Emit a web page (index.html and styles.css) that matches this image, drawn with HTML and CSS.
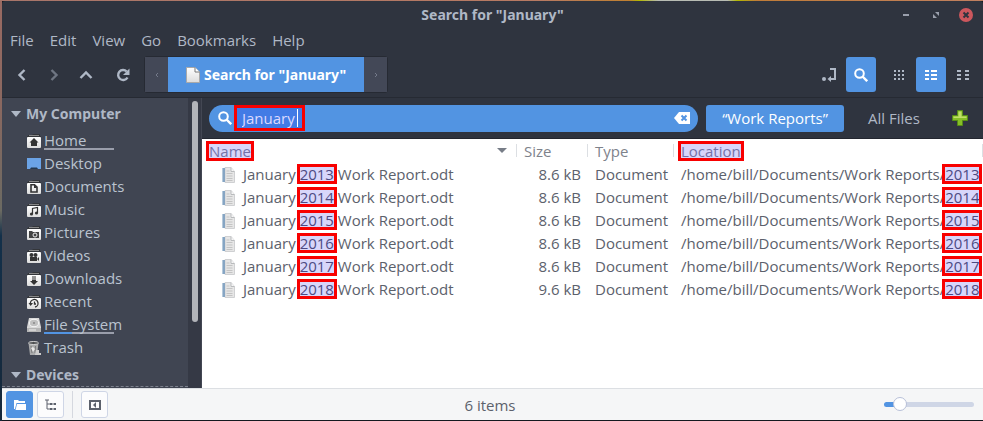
FILE: index.html
```html
<!DOCTYPE html>
<html lang="en">
<head>
<meta charset="utf-8">
<title>Search for "January"</title>
<link rel="stylesheet" href="styles.css">
</head>
<body>
<svg class="defs" aria-hidden="true">
  <linearGradient id="paper" x2="0" y2="1"><stop offset="0" stop-color="#fff"/><stop offset="1" stop-color="#dcdcdc"/></linearGradient>
  <symbol id="folder" viewBox="0 0 14 14">
    <path d="M0 3V2h1V1h4l1-1h7v2h1v1z" fill="#34363a"/><path d="M2 1.5h10" stroke="#888" stroke-width="1"/>
    <rect y="3" width="14" height="11" rx="1" fill="url(#paper)"/>
  </symbol>
  <symbol id="doc" viewBox="0 0 14 16">
    <path d="M3 .5h6l3.500 4v11H3z" fill="#e6e6e6" stroke="#cfd0d2"/>
    <path d="M9 .5v4h3.500" fill="#f6f6f6" stroke="#b9bbbd"/>
    <path d="M4.500 4h3M4.500 6.500h6M4.500 9h6M4.500 11.500h6M4.500 13.500h6" stroke="#c4c4c4"/>
    <path d="M0 1h3v14H0z" fill="#86a5c3"/><path d="M0 1h1v14H0z" fill="#b5c9db"/>
  </symbol>
  <symbol id="lens" viewBox="0 0 14 14">
    <circle cx="5.500" cy="5.500" r="4.300" fill="none" stroke="#fff" stroke-width="2"/><path d="M8.500 8.500l4.700 4.700" stroke="#fff" stroke-width="2.400"/>
  </symbol>
</svg>
<div class="window">
  <header class="titlebar">
    <h1>Search for "January"</h1>
    <div class="controls">
      <button aria-label="Minimize"><svg width="14" height="14"><path d="M4 7h6" stroke="#9a9fac" stroke-width="2"/></svg></button>
      <button aria-label="Restore"><svg width="14" height="14"><path d="M6 4h4v4zM4 6v4h4z" fill="#9a9fac"/></svg></button>
      <button aria-label="Close"><svg width="14" height="14"><circle cx="7" cy="7" r="7" fill="#cc575d"/><path d="M4.500 4.500l5 5m0-5l-5 5" stroke="#2f343f" stroke-width="2"/></svg></button>
    </div>
  </header>
  <nav class="menubar">
    <button>File</button><button>Edit</button><button>View</button><button>Go</button><button>Bookmarks</button><button>Help</button>
  </nav>
  <div class="toolbar">
    <div class="nav">
      <button aria-label="Back"><svg width="14" height="14"><path d="M9.500 2l-5 5 5 5" class="stroke"/></svg></button>
      <button aria-label="Forward" disabled><svg width="14" height="14"><path d="M4.500 2l5 5-5 5" class="stroke"/></svg></button>
      <button aria-label="Up"><svg width="14" height="14"><path d="M1.500 10L7 4.500l5.500 5.500" class="stroke"/></svg></button>
    </div>
    <button class="reload" aria-label="Reload"><svg width="14" height="14"><path d="M11.500 9.500a5 5 0 1 1-.8-6" class="stroke"/><path d="M13.500.5V7H7z" fill="#afb8c6"/></svg></button>
    <div class="path">
      <button aria-label="Scroll path left"><svg width="4" height="6"><path d="M3 1L1 3l2 2" fill="none" stroke="#747a8a"/></svg></button>
      <button class="current"><svg width="14" height="16"><path d="M.5.5H9l4.500 4.500v10.500H.5z" fill="url(#paper)" stroke="#a9a9a9"/><path d="M9 .5V5h4.500" fill="#fff" stroke="#777"/></svg>Search for "January"</button>
      <button aria-label="Scroll path right"><svg width="4" height="6"><path d="M1 1l2 2-2 2" fill="none" stroke="#747a8a"/></svg></button>
    </div>
    <div class="views">
      <button aria-label="Toggle location entry"><svg width="14" height="14"><path d="M8 1h5v10H8" fill="none" stroke="#afb8c6" stroke-width="2"/><path d="M9 8v6l-3.500-3z" fill="#afb8c6"/><circle cx="2" cy="11" r="2" fill="#afb8c6"/></svg></button>
      <button class="on" aria-label="Search"><svg width="14" height="14"><use href="#lens"/></svg></button>
    </div>
    <div class="views">
      <button aria-label="Icon view"><svg width="12" height="12"><path d="M1 2h10M1 6h10M1 10h10" stroke="#afb8c6" stroke-width="2" stroke-dasharray="2 2"/></svg></button>
      <button class="on" aria-label="List view"><svg width="12" height="12"><path d="M0 2h4m2 0h6M0 6h4m2 0h6M0 10h4m2 0h6" stroke="#fff" stroke-width="2"/></svg></button>
      <button aria-label="Compact view"><svg width="12" height="12"><path d="M0 2h4m4 0h4M0 6h4m4 0h4M0 10h4m4 0h4" stroke="#afb8c6" stroke-width="2"/></svg></button>
    </div>
  </div>
  <div class="content">
    <aside class="sidebar">
      <div class="places">
        <h2>My Computer</h2>
        <ul>
          <li><svg width="14" height="14"><use href="#folder"/><path d="M7 4L2.500 8.500H4V12h6V8.500h1.500z" fill="#333"/></svg><a href="#" class="usage">Home</a></li>
          <li><svg width="14" height="14"><path d="M0 1h14v11H0z" fill="#6ba3e6"/><path d="M4 10.500h6l1 1.500H3z" fill="#24384f"/></svg><a href="#">Desktop</a></li>
          <li><svg width="14" height="14"><use href="#folder"/><path d="M4 4.800h3.500L10 7v5H4z" fill="none" stroke="#333" stroke-width="1.600"/><path d="M7 4v4h3" fill="#333"/></svg><a href="#">Documents</a></li>
          <li><svg width="14" height="14"><use href="#folder"/><path d="M5.500 11V5.500l5-1V10" fill="none" stroke="#333" stroke-width="1.200"/><circle cx="4.500" cy="11" r="1.600" fill="#333"/><circle cx="9.500" cy="10" r="1.600" fill="#333"/></svg><a href="#">Music</a></li>
          <li><svg width="14" height="14"><use href="#folder"/><path d="M2 5h3l1 1h6v6H2z" fill="#444"/><circle cx="8" cy="9" r="2" fill="#444" stroke="#eee"/></svg><a href="#">Pictures</a></li>
          <li><svg width="14" height="14"><use href="#folder"/><circle cx="4.500" cy="6" r="2" fill="#333"/><circle cx="8.500" cy="6" r="2" fill="#333"/><path d="M3 8h7v4H3zm7 2l2-2v4z" fill="#333"/></svg><a href="#">Videos</a></li>
          <li><svg width="14" height="14"><use href="#folder"/><path d="M5 5h4M5 7h4" stroke="#333"/><path d="M5 8h4v1h2l-4 4-4-4h2z" fill="#333"/></svg><a href="#">Downloads</a></li>
          <li><svg width="14" height="14"><use href="#folder"/><path d="M3.500 9A3.800 3.800 0 1 1 8 12M7.500 6.500V9H9" fill="none" stroke="#333" stroke-width="1.300"/><path d="M1.500 8H6l-2.300 3z" fill="#333"/></svg><a href="#">Recent</a></li>
          <li><svg width="14" height="14"><path d="M2 0h10l2 9v5H0V9z" fill="#d8d8d8"/><ellipse cx="7" cy="5" rx="4.500" ry="3.700" fill="#c1c1c1" stroke="#f5f5f5"/><path d="M0 10h14v4H0z" fill="#b5b5b5"/><path d="M2 12h7" stroke="#eee"/><circle cx="7" cy="5" r="1" fill="#888"/></svg><a href="#" class="usage part">File System</a></li>
          <li><svg width="14" height="14"><path d="M1.500 2L3 14h7l1.500-12z" fill="#a9aaab"/><ellipse cx="6.500" cy="2" rx="5" ry="1.500" fill="#4c4e50" stroke="#d8d8d8"/><path d="M4 5l1 7M8.500 5L8 12" stroke="#777"/><path d="M4 7l2-1 2 2-2 3z" fill="#e8e8e8"/><path d="M9 9h3v3h2v2H8z" fill="#ccc"/></svg><a href="#">Trash</a></li>
        </ul>
        <h2>Devices</h2>
      </div>
      <div class="gutter"><div class="scroll"></div></div>
    </aside>
    <main>
      <form class="search">
        <div class="entry">
          <svg width="14" height="14"><use href="#lens"/></svg>
          <label class="query"><input type="text" value="January" aria-label="Search for files"><span class="caret"></span></label>
          <button type="button" aria-label="Clear"><svg width="16" height="12"><path d="M5 0h11v12H5L0 6z" fill="#fff"/><path d="M7.500 3.500l5 5m0-5l-5 5" stroke="#5294e2" stroke-width="2"/></svg></button>
        </div>
        <button type="button" class="scope on">“Work Reports”</button>
        <button type="button" class="scope all">All Files</button>
        <button type="button" class="add" aria-label="Add criterion"><svg width="16" height="16"><path d="M5.500.5h5v5h5v5h-5v5h-5v-5h-5v-5h5z" fill="#86bf26" stroke="#568c17"/><path d="M6.500 6.500v-5h3v5h5v1.500h-13V6.500z" fill="#c0df68"/></svg></button>
      </form>
      <table>
        <colgroup><col><col class="size"><col class="type"><col class="location"></colgroup>
        <thead><tr><th><div class="head"><mark>Name</mark><svg width="10" height="5"><path d="M0 0h10L5 5z" fill="#777d87"/></svg></div></th><th>Size</th><th>Type</th><th><mark>Location</mark></th></tr></thead>
        <tbody>
          <tr><td><svg width="14" height="16"><use href="#doc"/></svg>January <mark>2013</mark> Work Report.odt</td><td>8.6 kB</td><td>Document</td><td>/home/bill/Documents/Work Reports/<mark>2013</mark></td></tr>
          <tr><td><svg width="14" height="16"><use href="#doc"/></svg>January <mark>2014</mark> Work Report.odt</td><td>8.6 kB</td><td>Document</td><td>/home/bill/Documents/Work Reports/<mark>2014</mark></td></tr>
          <tr><td><svg width="14" height="16"><use href="#doc"/></svg>January <mark>2015</mark> Work Report.odt</td><td>8.6 kB</td><td>Document</td><td>/home/bill/Documents/Work Reports/<mark>2015</mark></td></tr>
          <tr><td><svg width="14" height="16"><use href="#doc"/></svg>January <mark>2016</mark> Work Report.odt</td><td>8.6 kB</td><td>Document</td><td>/home/bill/Documents/Work Reports/<mark>2016</mark></td></tr>
          <tr><td><svg width="14" height="16"><use href="#doc"/></svg>January <mark>2017</mark> Work Report.odt</td><td>8.6 kB</td><td>Document</td><td>/home/bill/Documents/Work Reports/<mark>2017</mark></td></tr>
          <tr><td><svg width="14" height="16"><use href="#doc"/></svg>January <mark>2018</mark> Work Report.odt</td><td>9.6 kB</td><td>Document</td><td>/home/bill/Documents/Work Reports/<mark>2018</mark></td></tr>
        </tbody>
      </table>
    </main>
  </div>
  <footer>
    <div class="panes">
      <button class="on" aria-label="Places"><svg width="12" height="10"><path d="M0 0h4l1 1h6v2H2.500L1 9H0z" fill="#fff"/><path d="M3 4h9v6H1.500z" fill="#fff"/></svg></button>
      <button aria-label="Tree"><svg width="12" height="12"><path d="M0 1h4M2 1v9h4M2 5h4M7 5h3M7 10h3" fill="none" stroke="#5c616c"/><path d="M5 4h2v2H5zM5 9h2v2H5zM9 4h2v2H9zM9 9h2v2H9z" fill="#5c616c"/></svg></button>
      <hr>
      <button aria-label="Hide sidebar"><svg width="12" height="10"><path d="M1 1h10v8H1z" fill="none" stroke="#5c616c" stroke-width="2"/><path d="M4 5l3-3v6z" fill="#5c616c"/></svg></button>
    </div>
    <p>6 items</p>
    <input type="range" min="0" max="100" value="12" aria-label="Zoom">
  </footer>
</div>
</body>
</html>
```
FILE: styles.css
```css
* { box-sizing: border-box; }
body {
  margin: 0;
  min-height: 100vh;
  display: grid;
  padding: 1px 0 1px 2px;
  background:
    linear-gradient(90deg, #a8756a, #b87a62 55%, #c08030 64%, #b4b800 65%, #b8bcb4 67%, #b8bcb4 74%, #b4b800 75%, #c07c38 77%, #c08060) top / 100% 1px no-repeat,
    linear-gradient(#9a6a62, #8a6860 25%, #6b6a62 50%, #13304a 56%, #16283a) left / 2px 100% no-repeat,
    #14181f;
  font-family: "Open Sans", "Noto Sans", sans-serif;
  font-size: 15px;
  line-height: 18px;
  color: #5c616c;
}
.defs { position: absolute; width: 0; height: 0; }
button { font: inherit; color: inherit; background: none; border: 0; padding: 0; display: flex; align-items: center; justify-content: center; }
svg { display: block; flex: none; }
h1, h2, p, ul { margin: 0; padding: 0; font-size: inherit; }
h1, h2, .path .current { font-family: "Noto Sans", sans-serif; font-size: 14px; font-weight: 700; }
.window { display: grid; grid-template-rows: 27px 24px 46px 1fr auto; min-width: 0; background: #2f343f; color: #afb8c6; border-radius: 3px 3px 0 0; }
.titlebar { display: grid; grid-template-columns: 1fr auto 1fr; align-items: center; padding: 0 10px; }
.titlebar h1 { grid-column: 2; }
.controls { display: flex; justify-content: flex-end; gap: 16px; }
.menubar { display: flex; gap: 16px; padding: 0 8px; align-items: center; }
.toolbar { display: flex; align-items: center; gap: 5px; padding: 0 5px 0 4px; border-bottom: 1px solid #262a33; }
.toolbar button { height: 35px; width: 30px; border-radius: 3px; }
.nav { display: flex; }
.nav button, .toolbar .reload { width: 32px; }
.nav button:disabled { opacity: .5; }
.stroke { fill: none; stroke: #afb8c6; stroke-width: 2.4; }
.path { display: flex; margin-right: auto; border: 1px solid #262a33; border-radius: 3px; }
.path button { width: 23px; background: #434857; border-radius: 0; }
.path .current { width: auto; padding: 0 18px; gap: 4px; background: #5294e2; color: #fff; }
.views { display: flex; gap: 2px; }
.views + .views { margin-left: 3px; }
.toolbar .on { background: #5294e2; }
.content { display: grid; grid-template-columns: 200px minmax(0, 1fr); }
.sidebar { display: flex; height: 0; min-height: 100%; overflow: hidden; border-right: 1px solid #434753; }
.places { position: relative; flex: 1; background: #404552; overflow: hidden; }
.places::after { content: ""; position: absolute; left: 0; right: 0; bottom: 1px; border-top: 1px dashed #7c818d; }
.places h2 { display: flex; align-items: center; gap: 5px; height: 31px; padding-left: 9px; }
.places h2::before { content: ""; border: 5px solid transparent; border-top: 6px solid #afb8c6; border-bottom: 0; }
.places ul { list-style: none; }
.places li { display: flex; align-items: center; gap: 3px; height: 23px; padding-left: 25px; }
.places a { color: #bac3cf; text-decoration: none; line-height: 19px; }
.usage { width: 70px; white-space: nowrap; background: linear-gradient(#9a9eab, #9a9eab) bottom / 100% 2px no-repeat; }
.places .part { background: linear-gradient(90deg, #5294e2 40%, #9a9eab 40%) bottom / 100% 2px no-repeat; }
.gutter { width: 13px; padding: 3px 3px 0 4px; background: #353945; }
.scroll { height: 77%; border-radius: 3px; background: #b2b4b9; }
main { display: flex; flex-direction: column; background: #fff; color: #5c616c; }
.search { display: flex; gap: 8px; height: 41px; align-items: center; padding: 0 7px; background: #2f343f; border-bottom: 1px solid #23262f; color: #afb8c6; }
.entry { flex: 1; display: flex; align-items: center; height: 27px; padding: 0 8px 0 9px; border-radius: 14px; background: #5294e2; }
.entry button { margin-left: auto; }
.query { position: relative; display: flex; margin-left: 2px; border: 3px solid #f80000; background: #427be5; }
.query input { width: 65px; height: 20px; padding: 0 5px; border: 0; background: none; font: inherit; color: #ddd9ff; outline: 0; }
.caret { position: absolute; right: 4px; top: 1px; bottom: 1px; width: 1px; background: #fff; }
.scope { height: 27px; width: 138px; border-radius: 3px; }
.scope.on { background: #5294e2; color: #fff; }
.scope.all { width: 84px; }
.add { width: 32px; }
table { width: 100%; table-layout: fixed; border-collapse: collapse; }
.size { width: 71px; }
.type { width: 86px; }
.location { width: 309px; }
th, td { height: 23px; padding: 0 7px; text-align: left; font-weight: 400; white-space: nowrap; }
th { color: #7e828b; background: linear-gradient(#dcdfe3, #dcdfe3) right center / 1px 13px no-repeat; }
th:first-child { padding-right: 10px; }
td:first-child { padding-left: 20px; }
td:nth-child(2) { text-align: right; }
td:last-child { padding-right: 0; }
td svg { display: inline-block; vertical-align: -3px; margin-right: 7px; }
.head { display: flex; align-items: center; justify-content: space-between; }
mark { display: inline-block; line-height: 14px; color: #4d4a83; background: #d8d6fa; outline: 3px solid #f80000; }
th mark { color: #7472a8; }
footer { display: grid; grid-template-columns: 1fr auto 1fr; align-items: center; height: 32px; padding: 0 9px 0 4px; background: #f5f6f7; border-top: 1px solid #dcdfe3; color: #5c616c; }
.panes { display: flex; align-items: center; gap: 4px; }
.panes button { width: 27px; height: 27px; border: 1px solid #cfd6e6; border-radius: 3px; background: #fcfcfd; }
.panes .on { background: #5294e2; border-color: #5294e2; }
hr { height: 27px; margin: 0 4px; border: 0; border-left: 1px solid #d5d8df; }
input[type=range] { appearance: none; justify-self: end; width: 90px; height: 16px; margin: 0; background: none; }
input[type=range]::-webkit-slider-runnable-track { height: 5px; border-radius: 3px; background: linear-gradient(90deg, #5294e2 16%, #cfd6e6 16%); }
input[type=range]::-webkit-slider-thumb { appearance: none; width: 14px; height: 14px; margin-top: -5px; border: 1px solid #b7c0d8; border-radius: 50%; background: #fff; }
```
